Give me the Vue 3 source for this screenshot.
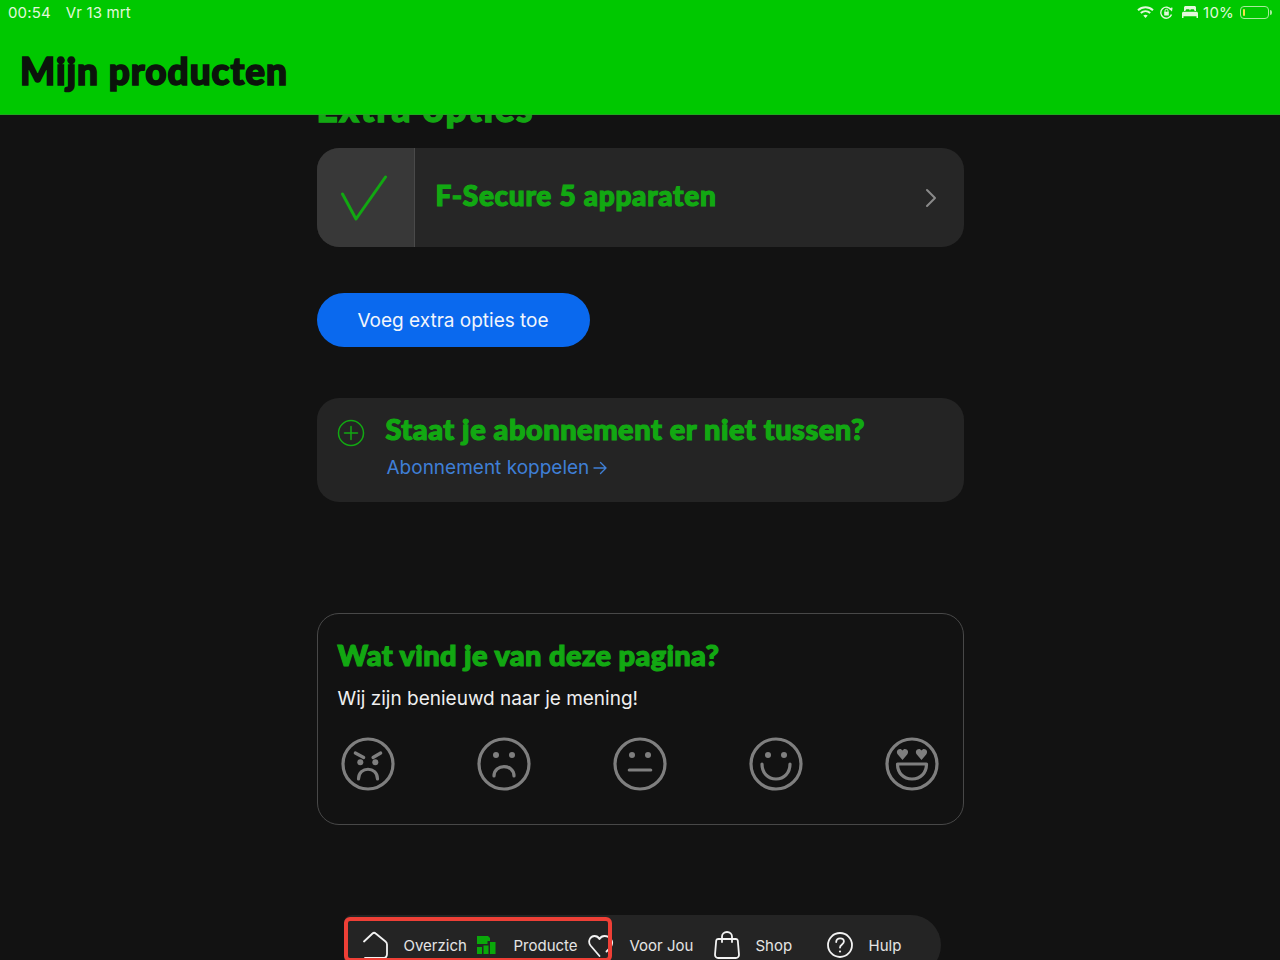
<template>
  <div class="page">
    <header class="top">
      <div class="status">
        <div class="status-left">
          <span>00:54</span>
          <span>Vr 13 mrt</span>
        </div>
        <div class="status-right">
          <svg width="17" height="14" viewBox="0 0 17 14" fill="none" stroke="#e2f8dc" stroke-width="2">
            <path d="M1 5.200c4.300-4 10.700-4 15 0" />
            <path d="M3.800 8c2.700-2.400 6.700-2.400 9.400 0" />
            <path d="M8.500 13 6.300 10.600c1.300-1 3.100-1 4.400 0z" fill="#e2f8dc" stroke="none" />
          </svg>
          <svg class="lock" width="13" height="13" viewBox="0 0 13 13" fill="none" stroke="#e2f8dc" stroke-width="1.400">
            <path d="M11.500 8.500A5.500 5.500 0 1 1 11 3.800" />
            <path d="M9.700 2.300 11.500 4l.4-2.400" />
            <rect x="4.200" y="5.800" width="4.600" height="3.600" rx=".5" fill="#e2f8dc" stroke="none" />
            <path d="M5 6V4.800a1.500 1.500 0 0 1 3 0V6" stroke-width="1" />
          </svg>
          <svg class="bed" width="16" height="12" viewBox="0 0 16 12" fill="#e2f8dc">
            <path d="M2 1.500C2 .7 2.700 0 3.500 0h9c.8 0 1.500.7 1.500 1.500V5h-1.500c0-1.200-.6-1.700-1.500-1.700H9.500c-.9 0-1.300.6-1.500 1.700-.2-1.100-.6-1.700-1.500-1.700H5c-.9 0-1.500.5-1.500 1.700H2z" />
            <path d="M1.500 5.800h13c.8 0 1.500.7 1.500 1.500V12h-1.500v-1.700h-13V12H0V7.300c0-.8.7-1.500 1.500-1.500z" />
          </svg>
          <span class="pct">10%</span>
          <div class="battery"><i class="battery-fill" :style="{ width: batteryPct + '%' }"></i></div>
          <i class="battery-nub"></i>
        </div>
      </div>
      <h1>Mijn producten</h1>
    </header>

    <main class="content">
      <div class="column">
        <h2 class="section-title">Extra opties</h2>

        <a class="option-card">
          <div class="option-check">
            <svg width="48" height="48" viewBox="0 0 48 48" fill="none" stroke="#12a812" stroke-width="3" stroke-linecap="round" stroke-linejoin="round">
              <path d="M1.500 20 15 45 44.500 3" />
            </svg>
          </div>
          <div class="option-name">F-Secure 5 apparaten</div>
          <svg class="chevron" width="12" height="20" viewBox="0 0 12 20" fill="none" stroke="#8a8a8a" stroke-width="2" stroke-linecap="round" stroke-linejoin="round">
            <path d="M2 2l8 8-8 8" />
          </svg>
        </a>

        <button class="add-btn">Voeg extra opties toe</button>

        <div class="link-card">
          <svg class="plus" width="28" height="28" viewBox="0 0 28 28" fill="none" stroke="#12a812" stroke-width="1.500" stroke-linecap="round">
            <circle cx="14" cy="14" r="12.500" />
            <path d="M14 7.500v13M7.500 14h13" />
          </svg>
          <div>
            <div class="link-title">Staat je abonnement er niet tussen?</div>
            <a class="link-sub">Abonnement koppelen
              <svg width="14" height="14" viewBox="0 0 14 14" fill="none" stroke="#3f7fd6" stroke-width="1.400" stroke-linecap="round" stroke-linejoin="round">
                <path d="M1 7h12M7.500 1.500 13 7l-5.500 5.500" />
              </svg>
            </a>
          </div>
        </div>

        <section class="feedback">
          <div class="feedback-title">Wat vind je van deze pagina?</div>
          <p class="feedback-text">Wij zijn benieuwd naar je mening!</p>
          <div class="faces">
            <svg v-for="face in faces" :key="face.name" width="54" height="54" viewBox="0 0 54 54" fill="none" stroke="#7f7f7f" stroke-width="3.200" stroke-linecap="round" stroke-linejoin="round">
              <circle cx="27" cy="27" r="25" />
              <path v-for="(d, i) in face.lines" :key="i" :d="d" />
              <path v-for="(d, i) in face.fills" :key="'f' + i" :d="d" fill="#7f7f7f" stroke="none" />
              <circle v-for="e in face.eyes" :key="e" :cx="e" :cy="face.eyeY" r="3" fill="#7f7f7f" stroke="none" />
            </svg>
          </div>
        </section>

        <nav class="tabbar">
          <div v-for="tab in tabs" :key="tab.label" class="tab" :class="tab.cls">
            <svg v-if="tab.icon === 'home'" width="26" height="28" viewBox="0 0 26 28" fill="none" stroke="#f2f2f2" stroke-width="1.800" stroke-linecap="round" stroke-linejoin="round">
              <path d="M2 10.500 10.500 2.500c1-.9 2.200-.9 3.200 0L23.500 10.500c1 .8 1.500 1.800 1.500 3V23c0 2.500-1.500 4-4 4H3" />
            </svg>
            <svg v-else-if="tab.icon === 'chart'" width="23" height="18" viewBox="0 0 23 18" fill="#0aa80a">
              <path d="M2 0h11l2 2v3h-2.500v3H2z" />
              <path d="M2 11h5v7H2zM8.500 9.500h5V18h-5zM15 6h5.500v12H15z" />
            </svg>
            <svg v-else-if="tab.icon === 'heart'" width="26" height="26" viewBox="0 0 26 26" fill="none" stroke="#f2f2f2" stroke-width="1.800" stroke-linecap="round" stroke-linejoin="round">
              <path d="M11.500 24 2.500 13.500C-.5 9.500 2 4 6.500 4c2.300 0 4 1.200 5 3 1-1.800 2.700-3 5-3 6 0 9 5.500 7 9.500-1 2-3 4-5 6" />
            </svg>
            <svg v-else-if="tab.icon === 'bag'" width="26" height="28" viewBox="0 0 26 28" fill="none" stroke="#f2f2f2" stroke-width="1.800" stroke-linecap="round" stroke-linejoin="round">
              <path d="M4 8h18c1 0 1.700.7 1.800 1.700L25 23.500c.1 2-1.200 3.500-3.200 3.500H4.200C2.200 27 .9 25.500 1 23.500L2.200 9.700C2.300 8.700 3 8 4 8z" />
              <path d="M8 11V5.500C8 3 10 1 13 1s5 2 5 4.500V11" />
            </svg>
            <svg v-else width="26" height="26" viewBox="0 0 26 26" fill="none" stroke="#f2f2f2" stroke-width="1.800" stroke-linecap="round" stroke-linejoin="round">
              <circle cx="13" cy="13" r="12" />
              <path d="M9.200 10c.1-2.300 1.700-3.700 3.900-3.700s3.800 1.400 3.800 3.300c0 2.900-3.900 2.900-3.900 6" />
              <circle cx="13" cy="19.500" r="1.100" fill="#f2f2f2" stroke="none" />
            </svg>
            <span class="tab-label">{{ tab.label }}</span>
          </div>
          <div class="red-mark"></div>
        </nav>
      </div>
    </main>
  </div>
</template>

<script setup>
const batteryPct = 10

const faces = [
  {
    name: 'angry', eyeY: 25.300, eyes: [19.300, 34.300],
    lines: ['M14.300 16 22.700 20.500', 'M39.700 16 32 20.500', 'M17.500 42C17.500 29 36.500 29 36.500 42'],
    fills: [],
  },
  {
    name: 'sad', eyeY: 18, eyes: [19, 35],
    lines: ['M17 39C17 26.500 37 26.500 37 39'],
    fills: [],
  },
  {
    name: 'neutral', eyeY: 18, eyes: [19, 35],
    lines: ['M16.300 33h21.400'],
    fills: [],
  },
  {
    name: 'happy', eyeY: 18, eyes: [19, 35],
    lines: ['M13 27c0 9 6 15 14 15s14-6 14-15'],
    fills: [],
  },
  {
    name: 'love', eyeY: 0, eyes: [],
    lines: ['M12.500 27h29c0 9-6 15-14.500 15s-14.500-6-14.500-15z'],
    fills: [
      'M17.500 23 12.800 17.500c-2-2.700-.3-5.500 2.200-5.500 1 0 1.900.6 2.500 1.500.6-.9 1.500-1.500 2.500-1.500 2.500 0 4.200 2.800 2.200 5.500z',
      'M36.500 23 31.800 17.500c-2-2.700-.3-5.500 2.200-5.500 1 0 1.900.6 2.500 1.500.6-.9 1.500-1.500 2.500-1.500 2.500 0 4.200 2.800 2.200 5.500z',
    ],
  },
]

const tabs = [
  { label: 'Overzich', icon: 'home' },
  { label: 'Producte', icon: 'chart' },
  { label: 'Voor Jou', icon: 'heart', cls: 'wide' },
  { label: 'Shop', icon: 'bag' },
  { label: 'Hulp', icon: 'help' },
]
</script>

<style>
html, body { margin: 0; background: #121212; }
</style>

<style scoped>
.page {
  width: 1280px;
  height: 960px;
  display: flex;
  flex-direction: column;
  overflow: hidden;
  background: #121212;
  font-family: Inter, "Liberation Sans", sans-serif;
}

/* groene kop */
.top {
  height: 115px;
  flex-shrink: 0;
  box-sizing: border-box;
  background: #00c800;
  border-bottom: 1px solid #1fa81f;
  position: relative;
  z-index: 1;
}

.status {
  height: 24px;
  display: flex;
  justify-content: space-between;
  align-items: center;
  padding: 0 8px 0 8px;
  color: #e2f8dc;
  font-size: 15px;
}

.status-left { display: flex; gap: 15px; letter-spacing: .15px; }

.status-right { display: flex; align-items: center; }
.lock { margin-left: 6px; }
.bed { margin-left: 9px; }
.pct { margin-left: 5px; letter-spacing: .2px; }

.battery {
  margin-left: 6px;
  width: 29px;
  height: 13px;
  box-sizing: border-box;
  border: 1px solid #a8eb9c;
  border-radius: 4px;
  padding: 2px;
}

.battery-fill {
  display: block;
  height: 100%;
  background: #f3e34a;
  border-radius: 1px;
}

.battery-nub {
  margin-left: 1px;
  width: 2px;
  height: 5px;
  background: #a8eb9c;
  border-radius: 0 2px 2px 0;
}

h1 {
  margin: 24px 0 0 20px;
  font-family: Lato, "Liberation Sans", sans-serif;
  font-size: 37px;
  line-height: 46px;
  font-weight: 900;
  letter-spacing: .95px;
  color: #0b140b;
  -webkit-text-stroke: 1.6px #0b140b;
}

.content {
  flex: 1;
  min-height: 0;
  overflow: hidden;
}

.column {
  width: 647px;
  margin: 0 auto;
  display: flex;
  flex-direction: column;
  align-items: stretch;
}

.section-title {
  margin: -27px 0 0;
  height: 60px;
  font-family: Lato, sans-serif;
  font-size: 37px;
  line-height: 40px;
  font-weight: 900;
  letter-spacing: 1.600px;
  color: #12a812;
  -webkit-text-stroke: 1.400px #12a812;
}

/* optie */
.option-card {
  height: 99px;
  display: flex;
  align-items: center;
  background: #262626;
  border-radius: 22px;
  overflow: hidden;
}

.option-check {
  width: 98px;
  height: 100%;
  box-sizing: border-box;
  flex-shrink: 0;
  display: flex;
  align-items: center;
  justify-content: center;
  background: #383838;
  border-right: 1px solid #4a4a4a;
}

.option-name {
  flex: 1;
  margin: -5px 0 0 21px;
  font-family: Lato, sans-serif;
  font-size: 28px;
  font-weight: 900;
  letter-spacing: .7px;
  color: #12a812;
  -webkit-text-stroke: 1.200px #12a812;
}

.chevron { margin-right: 27px; }

.add-btn {
  align-self: flex-start;
  margin-top: 46px;
  width: 273px;
  height: 54px;
  border: 0;
  border-radius: 27px;
  background: #0a69ee;
  color: #f1f5fc;
  font-family: Inter, sans-serif;
  font-size: 19px;
}

/* abonnement koppelen */
.link-card {
  margin-top: 51px;
  height: 104px;
  box-sizing: border-box;
  padding: 16px 20px;
  display: flex;
  gap: 21px;
  background: #242424;
  border-radius: 22px;
}

.plus { margin-top: 5px; flex-shrink: 0; }

.link-title {
  font-family: Lato, sans-serif;
  font-size: 29px;
  line-height: 30px;
  font-weight: 900;
  letter-spacing: .5px;
  color: #12a812;
  -webkit-text-stroke: 1.200px #12a812;
}

.link-sub {
  display: flex;
  align-items: center;
  gap: 4px;
  margin: 12px 0 0 1px;
  color: #3f7fd6;
  font-size: 19px;
  line-height: 24px;
}

/* feedback */
.feedback {
  margin-top: 111px;
  height: 212px;
  box-sizing: border-box;
  padding: 24px 24px 0 20px;
  border: 1px solid #484848;
  border-radius: 22px;
}

.feedback-title {
  font-family: Lato, sans-serif;
  font-size: 29px;
  line-height: 34px;
  font-weight: 900;
  letter-spacing: .35px;
  color: #12a812;
  -webkit-text-stroke: 1.200px #12a812;
}

.feedback-text {
  margin: 15px 0 0;
  font-size: 19px;
  line-height: 24px;
  color: #efefef;
}

.faces {
  margin-top: 26px;
  display: flex;
  justify-content: space-between;
  padding-left: 3px;
}

/* tabbalk, loopt onder de rand door */
.tabbar {
  position: relative;
  margin: 90px 0 0 27px;
  width: 597px;
  height: 60px;
  flex-shrink: 0;
  box-sizing: border-box;
  padding: 15px 0 0 18px;
  display: flex;
  align-items: flex-start;
  background: #242424;
  border-radius: 8px 30px 30px 8px;
}

.tab {
  width: 113px;
  height: 30px;
  flex-shrink: 0;
  display: flex;
  align-items: center;
  gap: 16px;
}

.tab.wide { width: 126px; }

.tab-label {
  white-space: nowrap;
  font-size: 15px;
  color: #e4e4e4;
}

.red-mark {
  position: absolute;
  left: 0;
  top: 2px;
  width: 268px;
  height: 45px;
  box-sizing: border-box;
  border: 4px solid #ee3f36;
  border-radius: 6px;
}
</style>
